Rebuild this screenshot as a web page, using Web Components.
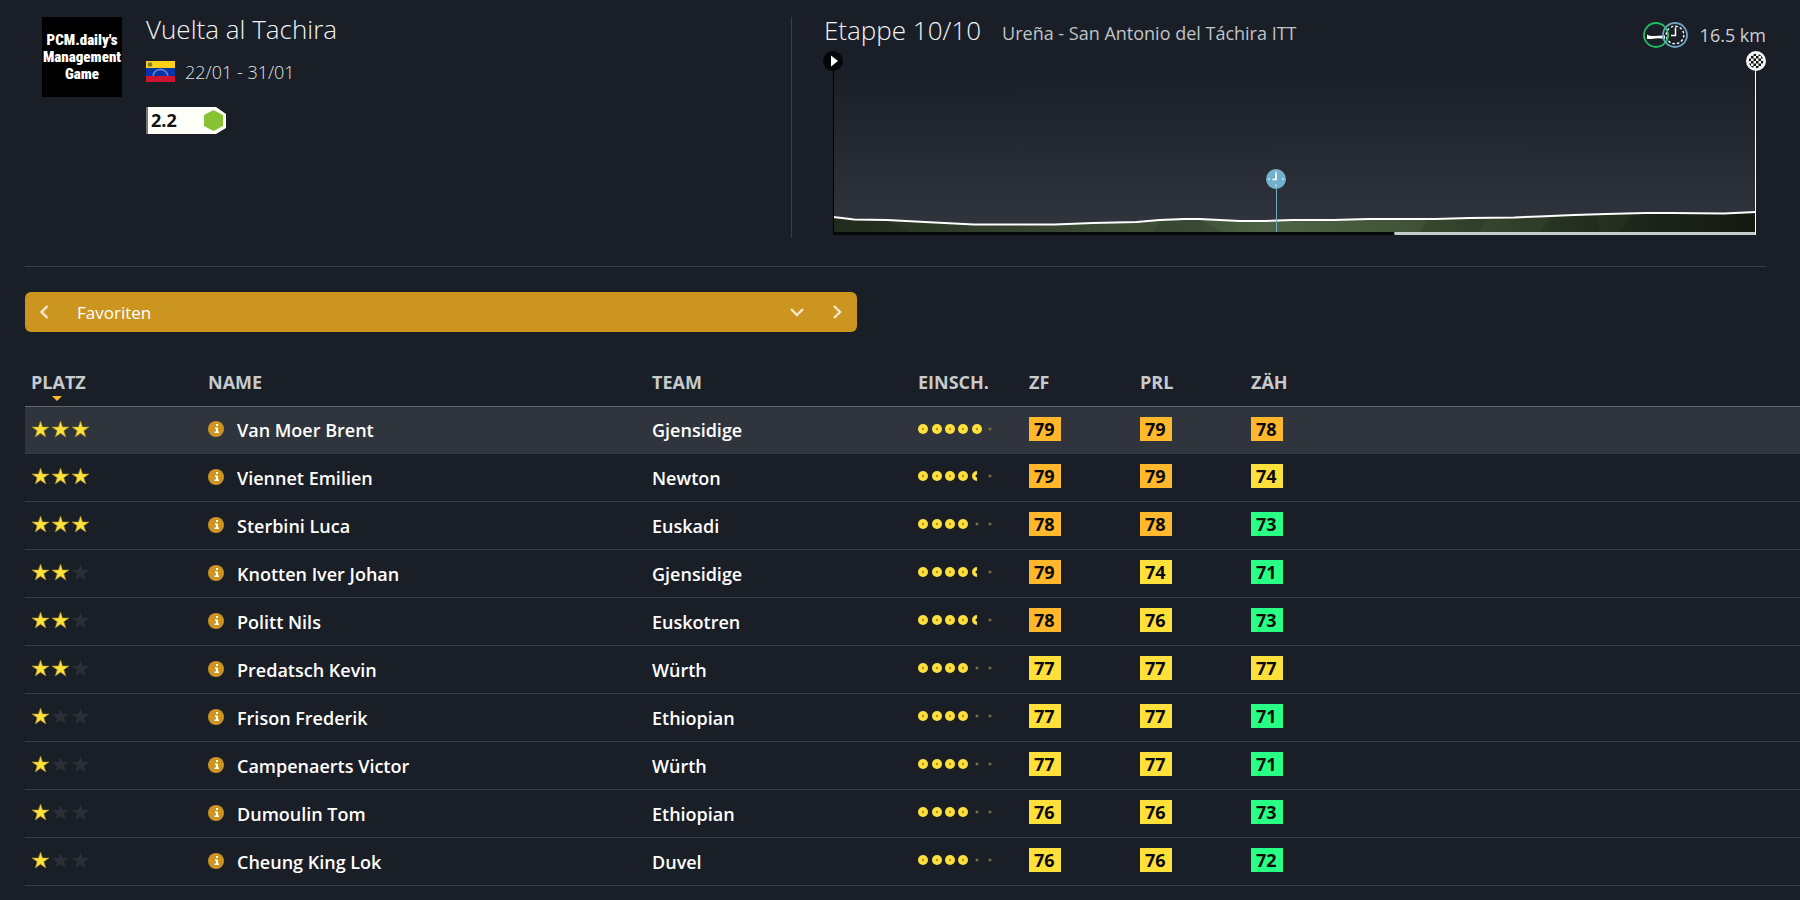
<!DOCTYPE html>
<html lang="de">
<head>
<meta charset="utf-8">
<title>Vuelta al Tachira – Etappe 10/10</title>
<style>
body{margin:0;background:#1a1e26;color:#fff;font-family:"Open Sans","Noto Sans",sans-serif;font-size:18px;overflow-x:hidden}
</style>
</head>
<body>
<race-page></race-page>
<script>
function define(name, html, render){
  const t=document.createElement('template');
  t.innerHTML=html;
  customElements.define(name, class extends HTMLElement{
    constructor(){
      super();
      this.attachShadow({mode:'open'}).append(t.content.cloneNode(true));
    }
    connectedCallback(){ if(render && !this.done){ this.done=true; render(this, this.shadowRoot); } }
  });
}

define('team-logo', `
<style>
:host{display:flex;flex-direction:column;justify-content:center;align-items:center;box-sizing:border-box;width:80px;height:80px;background:#000;color:#fff;
font:900 15px/17px "Roboto Condensed",Roboto,sans-serif;white-space:nowrap}
</style><slot></slot>`);

define('country-flag', `
<style>:host{display:block;width:29px;height:21px}svg{display:block}</style>
<svg width="29" height="21" viewBox="0 0 29 21" role="img" aria-label="Venezuela">
<rect width="29" height="7" fill="#fcd116"/><rect y="7" width="29" height="8" fill="#0a35a8"/><rect y="15" width="29" height="6" fill="#cf1430"/>
<path d="M7 14.500C9 6.500 19.500 6.500 22 14.500" fill="none" stroke="#6f8ccb" stroke-width="1.600"/>
<circle cx="4" cy="3.500" r="2.300" fill="#7b7a34"/></svg>`);

define('race-class', `
<style>
:host{display:flex;align-items:center;justify-content:space-between;box-sizing:border-box;width:80px;height:27px;padding:0 3px 0 3px;border-left:2px solid #777;background:#fffffa;color:#111;
clip-path:polygon(0 0,70px 0,80px 7px,80px 21px,70px 100%,0 100%);font:700 18px/27px "Open Sans",sans-serif}
svg{display:block}
</style><slot></slot><svg width="19" height="21" viewBox="0 0 19 21"><path d="M9.500 0 19 5v11l-9.500 5L0 16V5z" fill="#86c232"/></svg>`);

define('race-info', `
<style>
:host{display:flex;gap:24px;padding-left:17px}
div{display:flex;flex-direction:column}
h1{margin:0;font-size:26px;font-weight:300;line-height:24px;color:#f2f4f6}
p{margin:16px 0 20px;display:flex;align-items:center;gap:10px;font-size:18px;font-weight:300;line-height:30px;color:#dfe2e4}
country-flag{margin-bottom:2px}
</style>
<team-logo><span>PCM.daily's</span><span>Management</span><span>Game</span></team-logo>
<div><h1>Vuelta al Tachira</h1>
<p><country-flag></country-flag><span>22/01 - 31/01</span></p>
<race-class>2.2</race-class></div>`);

define('stage-icons', `
<style>:host{display:block}svg{display:block}</style>
<svg width="46" height="26" viewBox="0 0 46 26" fill="none">
<circle cx="13" cy="13" r="12" stroke="#20bd66" stroke-width="1.800"/>
<path d="M4 12.500q3 2 7 1.500t11-.5v3.500q-5-1-10-.5t-8 .5z" fill="#fff"/>
<circle cx="32" cy="13" r="12" stroke="#6da5bf" stroke-width="1.800"/>
<circle cx="32" cy="13" r="8.800" stroke="#fff" stroke-width="1.400" stroke-dasharray="2.600 2.007"/>
<path d="M32.500 5.500v8H28" stroke="#fff" stroke-width="1.500"/>
<path d="M22 5.500a12 12 0 0 1 1.500 13" stroke="#20bd66" stroke-width="1.400"/>
</svg>`);

define('stage-profile', `
<style>
:host{display:block;position:relative;height:184px;margin:0 10px 0 9px}
.plot{display:block;width:100%;height:184px}
.pin{position:absolute;display:block;transform:translateX(-50%)}
.start{left:0;top:0}.end{left:100%;top:0}.split{left:48%;top:118px}
</style>
<svg class="plot" viewBox="0 0 924 184" preserveAspectRatio="none">
<defs>
<linearGradient id="sky" x1="0" y1="0" x2="0" y2="1"><stop offset="0" stop-color="#1a1e26"/><stop offset=".55" stop-color="#262a32"/><stop offset="1" stop-color="#31353d"/></linearGradient>
<linearGradient id="land" x1="0" y1="0" x2="1" y2="0"><stop offset="0" stop-color="#25301f"/><stop offset=".2" stop-color="#34422e"/><stop offset=".4" stop-color="#42533a"/><stop offset=".47" stop-color="#4e6345"/><stop offset=".6" stop-color="#43563a"/><stop offset=".75" stop-color="#303e29"/><stop offset=".9" stop-color="#1e271a"/><stop offset="1" stop-color="#171d12"/></linearGradient>
</defs>
<rect y="15" width="924" height="166" fill="url(#sky)"/>
<path d="M0 166 9 167 21 168.500 54 169 92 171 141 173.500H222L260 172 304 171 327 169 352 168H367L407 170H433L460 169H501L536 168H603L637 167 682 166.500 707 165.500 742 164 774 163 813 162H839L892 162.500 924 161V181H0z" fill="url(#land)"/>
<path d="M0 181V167l52 2 25 12zM367 168l23 13h-70l8-11z" fill="#000" opacity=".1"/>
<path d="M595 168l-8 13h60l10-14zM720 165l-12 16h60l-4-17zM800 163l-12 18h136v-19z" fill="#000" opacity=".1"/>
<path d="M0 166 9 167 21 168.500 54 169 92 171 141 173.500H222L260 172 304 171 327 169 352 168H367L407 170H433L460 169H501L536 168H603L637 167 682 166.500 707 165.500 742 164 774 163 813 162H839L892 162.500 924 161" fill="none" stroke="#fff" stroke-width="2" vector-effect="non-scaling-stroke"/>
<rect y="181" width="562" height="3" fill="#07080a"/><rect x="562" y="181" width="362" height="3" fill="#c6cdcd"/>
<rect y="15" width="1" height="169" fill="#000"/><rect x="923" y="15" width="1" height="169" fill="#fff"/>
</svg>
<svg class="pin start" width="20" height="20" viewBox="0 0 20 20"><circle cx="10" cy="10" r="10" fill="#050607"/><path d="M8 4.500 15 10l-7 5.500z" fill="#fff"/></svg>
<svg class="pin split" width="20" height="63" viewBox="0 0 20 63"><path d="M10.500 18v45" stroke="#6fa9c4"/><circle cx="10" cy="10" r="10" fill="#73b0cd"/><path d="M10 4v6.500H6.500" fill="none" stroke="#fff" stroke-width="1.600"/><path d="M10 15.500v2M16 10h2M2 10h2M10 2v2" stroke="#d4e8f1" stroke-width="1.400"/></svg>
<svg class="pin end" width="20" height="20" viewBox="0 0 20 20"><defs><pattern id="chk" width="5" height="5" patternUnits="userSpaceOnUse"><path d="M0 0h2.500v2.500H0zM2.500 2.500H5V5H2.500z" fill="#111"/></pattern></defs><circle cx="10" cy="10" r="10" fill="#f4f5f5"/><circle cx="10" cy="10" r="7.300" fill="url(#chk)"/></svg>`);

define('stage-info', `
<style>
:host{display:block}
header{display:flex;align-items:baseline;height:34px}
h2{margin:0 21px 0 0;font-size:26px;font-weight:300;line-height:26px;color:#f2f4f6}
span{font-size:18px;line-height:26px;color:#bfc4c8}
.km{margin-left:auto;align-self:flex-start;display:flex;align-items:center;gap:11px;padding-top:5px;line-height:26px;font-weight:500;color:#cdd1d4}
</style>
<header><h2>Etappe 10/10</h2><span>Ureña - San Antonio del Táchira ITT</span>
<div class="km"><stage-icons></stage-icons>16.5 km</div></header>
<stage-profile></stage-profile>`);

define('view-picker', `
<style>
:host{display:flex;box-sizing:border-box;width:46.9%;height:40px;background:#cc951f;border-radius:6px;overflow:hidden}
button{width:40px;border:0;padding:0;background:none;display:grid;place-items:center}
label{flex:1;display:grid;align-items:center}
select,svg{grid-area:1/1}
select{appearance:none;width:100%;height:40px;border:0;padding:2px 12px 0;background:none;color:#fff;font:400 17px/24px "Open Sans",sans-serif}
label svg{justify-self:end;margin-right:12px;pointer-events:none}
path{fill:none;stroke:#f6e8cb;stroke-width:2.400}
</style>
<button aria-label="Zurück"><svg width="16" height="16"><path d="M10.500 2 4.500 8l6 6"/></svg></button>
<label aria-label="Ansicht"><select><option>Favoriten</option></select><svg width="16" height="16"><path d="M2 5l6 6 6-6"/></svg></label>
<button aria-label="Weiter"><svg width="16" height="16"><path d="M5 2l6 6-6 6"/></svg></button>`);

define('star-rating', `
<style>:host{display:flex;width:60px;gap:1px}svg{display:block}</style>`, (el, root)=>{
  const n=+el.getAttribute('value');
  let h='';
  for(let i=0;i<3;i++) h+=`<svg width="19" height="18" viewBox="0 0 19 18"><path d="M9.500 1l2 6H18l-5.200 3.700L14.800 17 9.500 13.200 4.200 17l2-6.300L1 7h6.500z" fill="${i<n?'#fde03a':'#2b3038'}" ${i<n?'stroke="#a58d20" stroke-width=".6"':''}/></svg>`;
  root.append(document.createRange().createContextualFragment(h));
});

define('dot-rating', `
<style>:host{display:block}svg{display:block}</style>`, (el, root)=>{
  const n=+el.getAttribute('value'); let h='';
  [5,19,32,45,59,72].forEach((x,i)=>{
    if(i+1<=n) h+=`<circle cx="${x}" cy="5" r="5" fill="#fde03a"/><circle cx="${x}" cy="5" r="1.200" fill="#a8922c"/>`;
    else if(i<n) h+=`<path d="M${x} 0a5 5 0 0 0 0 10V6.500a1.500 1.500 0 0 1 0-3z" fill="#fde03a"/>`;
    else h+=`<circle cx="${x}" cy="5" r="1.600" fill="#756b40"/>`;
  });
  root.append(document.createRange().createContextualFragment(`<svg width="78" height="10">${h}</svg>`));
});

define('skill-value', `
<style>
:host{display:block;box-sizing:border-box;width:32px;height:24px;padding-left:5px;color:#0b0b0b;background:#27ff85;font-weight:700;font-size:18px;line-height:24px}
:host([level=mid]){background:#fde03a}
:host([level=high]){background:#ffb72b}
</style><slot></slot>`, el=>{
  const v=+el.textContent;
  if(v>77) el.setAttribute('level','high'); else if(v>73) el.setAttribute('level','mid');
});

define('rider-name', `
<style>:host{display:flex;align-items:center;gap:13px}svg{display:block;margin-bottom:2px}</style>
<svg width="16" height="16" viewBox="0 0 16 16"><circle cx="8" cy="8" r="8" fill="#cc951f"/><path d="M8 3h2v2H8zM7 6.500h3v4h1v1.500H6.500v-1.500H8V8H7z" fill="#fff"/></svg>
<span><slot></slot></span>`);

define('rider-table', `
<style>
:host{display:block}
table{width:100%;border-collapse:collapse;table-layout:fixed}
th,td{padding:0 0 0 6px;text-align:left;white-space:nowrap}
th{height:48px;border-bottom:1px solid #62666c;color:#c6cbcd;font-weight:700;line-height:24px;position:relative}
th[aria-sort]::after{content:"";position:absolute;left:27px;bottom:5px;border:5px solid transparent;border-top-color:#ffb72b;border-bottom:0}
td{height:47px;border-bottom:1px solid #373b44;font-weight:600;line-height:24px}
tbody tr:first-child{background:#30343c}
tbody tr:first-child td{height:46px}
star-rating,dot-rating,skill-value{margin-bottom:3px}
.team{display:block}
</style>
<table>
<colgroup><col style="width:177px"><col style="width:444px"><col style="width:266px"><col style="width:111px"><col style="width:111px"><col style="width:111px"><col></colgroup>
<thead><tr><th aria-sort="descending">PLATZ</th><th>NAME</th><th>TEAM</th><th>EINSCH.</th><th>ZF</th><th>PRL</th><th>ZÄH</th></tr></thead>
<tbody></tbody></table>`, (el, root)=>{
  root.querySelector('tbody').innerHTML=[
    [3,'Van Moer Brent','Gjensidige',5,79,79,78],
    [3,'Viennet Emilien','Newton',4.5,79,79,74],
    [3,'Sterbini Luca','Euskadi',4,78,78,73],
    [2,'Knotten Iver Johan','Gjensidige',4.5,79,74,71],
    [2,'Politt Nils','Euskotren',4.5,78,76,73],
    [2,'Predatsch Kevin','Würth',4,77,77,77],
    [1,'Frison Frederik','Ethiopian',4,77,77,71],
    [1,'Campenaerts Victor','Würth',4,77,77,71],
    [1,'Dumoulin Tom','Ethiopian',4,76,76,73],
    [1,'Cheung King Lok','Duvel',4,76,76,72]
  ].map(([s,n,t,d,...v])=>`<tr><td><star-rating value="${s}"></star-rating></td><td><rider-name>${n}</rider-name></td><td><span class="team">${t}</span></td><td><dot-rating value="${d}"></dot-rating></td>${v.map(x=>`<td><skill-value>${x}</skill-value></td>`).join('')}</tr>`).join('');
});

define('race-page', `
<style>
:host{display:block;padding:17px 0 14px 25px}
.top{display:grid;grid-template-columns:766px 1fr;margin-right:34px;padding-bottom:28px;border-bottom:1px solid #3a3e46}
stage-info{border-left:1px solid #3a3e46;padding-left:32px;height:221px}
view-picker{margin:25px 0 26px}
</style>
<div class="top"><race-info></race-info><stage-info></stage-info></div>
<view-picker></view-picker>
<rider-table></rider-table>`);
</script>
</body>
</html>
